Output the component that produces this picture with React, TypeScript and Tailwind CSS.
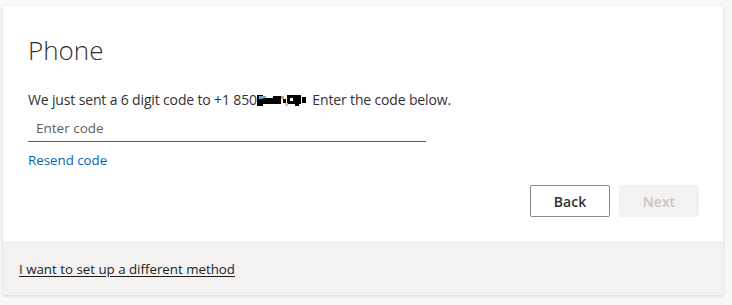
import React from "react";

// redacted phone digits, drawn as a pixel block
function Redacted() {
  return (
    <svg width="52" height="13" viewBox="0 0 52 13" className="inline-block align-[-2px]">
      <rect x="0" y="1" width="6" height="11" fill="#000" />
      <rect x="2" y="2" width="7" height="3" fill="#6fa8c8" />
      <rect x="6" y="4" width="12" height="6" fill="#000" />
      <rect x="16" y="2" width="8" height="8" fill="#000" />
      <rect x="24" y="2" width="3" height="3" fill="#e8a040" />
      <rect x="26" y="5" width="3" height="4" fill="#000" />
      <rect x="30" y="1" width="14" height="9" fill="#000" />
      <rect x="33" y="4" width="3" height="3" fill="#fff" />
      <rect x="38" y="9" width="4" height="3" fill="#000" />
      <rect x="28" y="9" width="3" height="3" fill="#d8c8a0" />
      <rect x="45" y="3" width="4" height="6" fill="#000" />
    </svg>
  );
}

export default function App() {
  return (
    <div
      className="w-[732px] h-[305px] bg-[#f8f8f8] pt-[6px] pl-[3px]"
      style={{ fontFamily: '"Open Sans", "Noto Sans", sans-serif' }}
    >
      <div className="w-[720px] bg-white shadow-[0_1px_3px_rgba(0,0,0,0.15)]">
        <div className="pl-[25px] pr-[24px] pt-[26px] pb-[25px]">
          <h1 className="text-[26px] font-light text-[#323130] leading-[36px]">Phone</h1>
          <p className="mt-[22px] text-[14px] text-[#323130] leading-[20px] tracking-[-0.15px]">
            We just sent a 6 digit code to +1 850<Redacted /> Enter the code below.
          </p>
          <div className="mt-[6px] w-[398px] border-b border-[#605e5c] h-[26px] flex items-center pl-[8px]">
            <span className="text-[13.5px] text-[#605e5c]">Enter code</span>
          </div>
          <a className="block mt-[7px] text-[13.3px] text-[#0067b8] leading-[22px] w-fit">Resend code</a>
          <div className="mt-[14px] flex justify-end gap-[9px]">
            <button className="w-[80px] h-[32px] rounded-[2px] border border-[#8a8886] text-[14px] font-semibold text-[#323130] bg-white">
              Back
            </button>
            <button className="w-[80px] h-[32px] rounded-[2px] bg-[#f3f2f1] text-[14px] font-semibold text-[#c8c6c4]">
              Next
            </button>
          </div>
        </div>
        <div className="bg-[#f3f2f1] border-t border-[#e8e8e8] h-[53px] flex items-center pl-[16px]">
          <a className="text-[13.3px] text-[#201f1e] underline underline-offset-[2px] mt-[1px]">
            I want to set up a different method
          </a>
        </div>
      </div>
    </div>
  );
}
